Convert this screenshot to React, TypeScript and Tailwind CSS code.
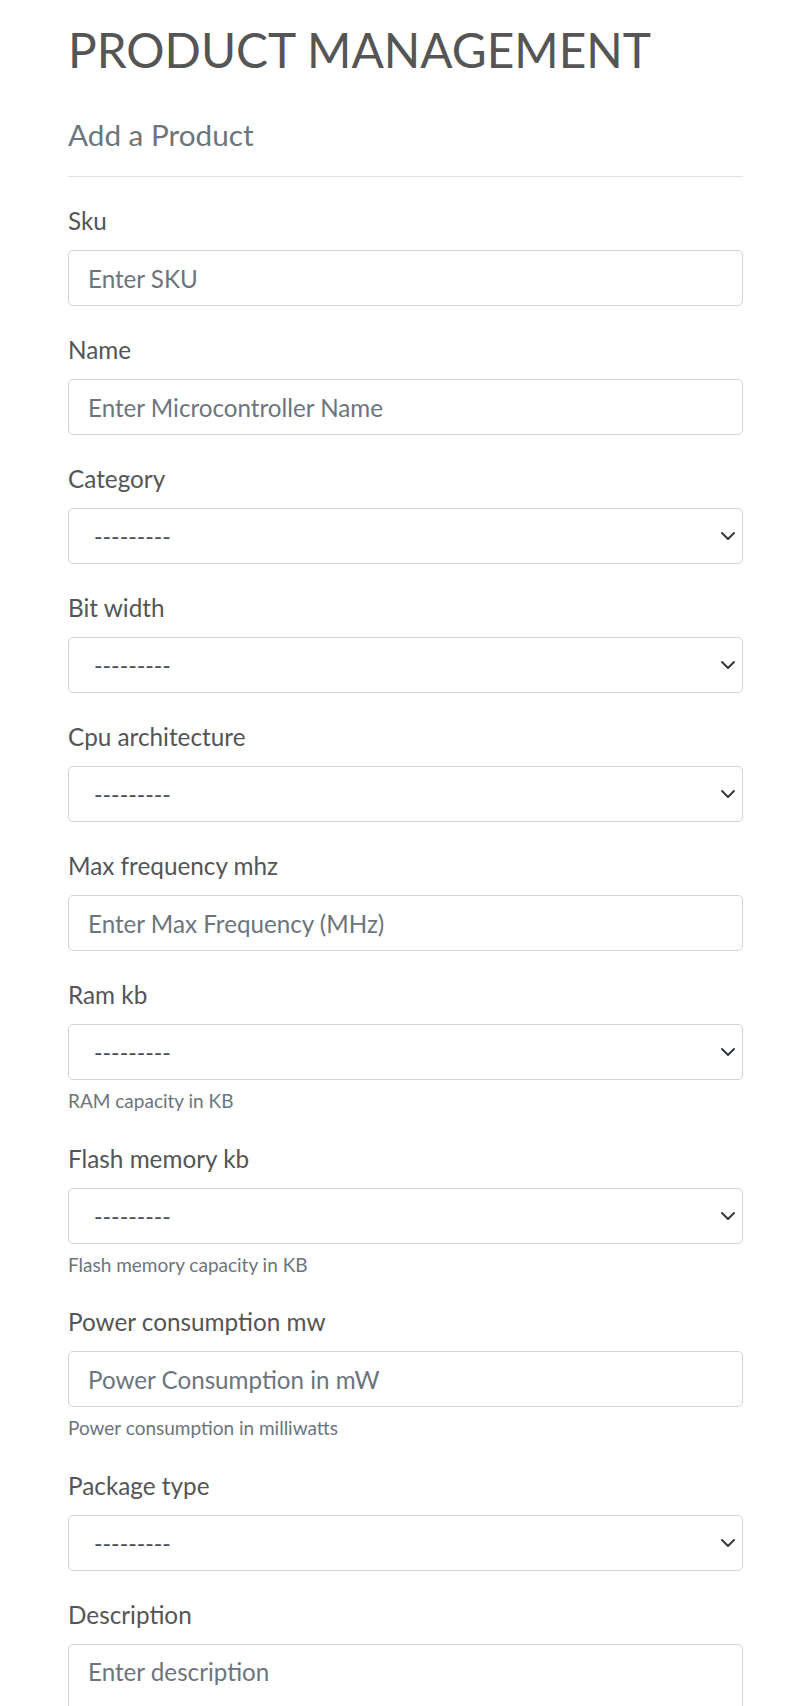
import React from "react";

type Field = {
  label: string;
  kind: "input" | "select" | "textarea";
  placeholder?: string;
  help?: string;
};

const FIELDS: Field[] = [
  { label: "Sku", kind: "input", placeholder: "Enter SKU" },
  { label: "Name", kind: "input", placeholder: "Enter Microcontroller Name" },
  { label: "Category", kind: "select" },
  { label: "Bit width", kind: "select" },
  { label: "Cpu architecture", kind: "select" },
  { label: "Max frequency mhz", kind: "input", placeholder: "Enter Max Frequency (MHz)" },
  { label: "Ram kb", kind: "select", help: "RAM capacity in KB" },
  { label: "Flash memory kb", kind: "select", help: "Flash memory capacity in KB" },
  { label: "Power consumption mw", kind: "input", placeholder: "Power Consumption in mW", help: "Power consumption in milliwatts" },
  { label: "Package type", kind: "select" },
  { label: "Description", kind: "textarea", placeholder: "Enter description" },
];

const controlBase =
  "block w-full rounded-[5px] border border-[#ced4da] bg-white text-[#495057] placeholder:text-[#6c757d] outline-none";

function Chevron() {
  return (
    <svg
      className="pointer-events-none absolute right-[7px] top-1/2 -translate-y-1/2 w-[16px] h-[16px]"
      viewBox="0 0 16 16"
      fill="none"
    >
      <path d="M2 5l6 6 6-6" stroke="#343a40" strokeWidth={2} strokeLinecap="round" strokeLinejoin="round" />
    </svg>
  );
}

function FormField({ field }: { field: Field }) {
  return (
    <div className="mb-[27px]">
      <label className="block text-[24.3px] leading-[33px] mb-[13px] text-[#555555]">{field.label}</label>

      {field.kind === "input" && (
        <input
          type="text"
          placeholder={field.placeholder}
          className={`${controlBase} h-[56px] px-[19px] text-[24.2px] leading-[34px]`}
        />
      )}

      {field.kind === "select" && (
        <div className="relative">
          <select
            className={`${controlBase} h-[56px] pl-[25px] pr-[40px] appearance-none text-[23px] leading-[34px]`}
            defaultValue=""
          >
            <option value="">---------</option>
          </select>
          <Chevron />
        </div>
      )}

      {field.kind === "textarea" && (
        <textarea
          rows={3}
          placeholder={field.placeholder}
          className={`${controlBase} px-[19px] pt-[10px] pb-[8px] text-[24.2px] leading-[34px] resize-y`}
        />
      )}

      {field.help && (
        <div className="mt-[8px] text-[19px] leading-[26.5px] text-[#6c757d]">{field.help}</div>
      )}
    </div>
  );
}

export default function App() {
  return (
    <div
      className="min-h-screen bg-white pl-[68px] pr-[44px] pt-[21px]"
      style={{ fontFamily: "Lato, 'Open Sans', sans-serif" }}
    >
      <h1 className="text-[47.8px] leading-[58px] font-normal text-[#555555]">PRODUCT MANAGEMENT</h1>

      <h2 className="mt-[38px] text-[29.7px] leading-[36px] font-normal text-[#6c757d]">Add a Product</h2>

      <hr className="mt-[23px] mb-[27px] border-0 border-t border-[#dee2e6]" />

      <form>
        {FIELDS.map((f) => (
          <FormField key={f.label} field={f} />
        ))}
      </form>
    </div>
  );
}
